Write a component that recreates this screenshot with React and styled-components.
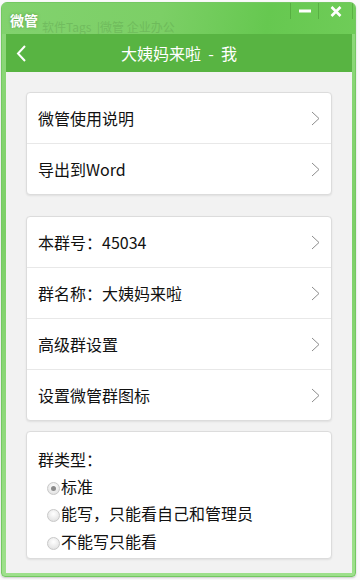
import React from 'react';
import styled, { createGlobalStyle } from 'styled-components';

const GlobalStyle = createGlobalStyle`
    html, body {
        margin: 0;
        padding: 0;
        background: #fafafa;
    }
    body {
        font-family: "Noto Sans CJK SC", "Noto Sans", sans-serif;
    }
`

const Desktop = styled.div`
    width: 360px;
    height: 580px;
    padding: 2px 4px 0 1px;
    box-sizing: border-box;
    overflow: hidden;
`

const Window = styled.div`
    height: 575px;
    display: flex;
    flex-direction: column;
    border: 1px solid #74c862;
    border-radius: 6px 6px 4px 4px;
    background: linear-gradient(180deg, #8fd97c 0%, #7ccf67 40%, #9ee08c 100%);
    padding: 0 3px 3px 4px;
    box-sizing: border-box;
    box-shadow: 0 1px 2px rgba(0, 0, 0, 0.2);
`

const TitleBar = styled.div`
    position: relative;
    height: 31px;
    flex: none;
    display: flex;
    align-items: flex-start;
    justify-content: space-between;
    background: linear-gradient(100deg, #82d26e 0%, #7ccf66 45%, #66c850 75%, #6fcc58 100%);
    margin: 0 -3px 0 -4px;
    border-radius: 5px 5px 0 0;
`

const AppName = styled.span`
    position: relative;
    z-index: 1;
    color: #fff;
    font-size: 14px;
    font-weight: bold;
    line-height: 16px;
    margin: 9px 0 0 8px;
    text-shadow: 0 0 3px rgba(60, 120, 40, 0.6);
`

const Ghost = styled.span`
    position: absolute;
    left: 40px;
    top: 17px;
    font-size: 12px;
    line-height: 14px;
    color: #3a6b30;
    opacity: 0.2;
    white-space: nowrap;
`

const WinButtons = styled.div`
    display: flex;
    height: 16px;
    margin-right: 2px;
    border-left: 1px solid rgba(70, 150, 50, 0.5);
`

const WinButton = styled.div`
    width: ${p => p.w}px;
    display: flex;
    align-items: center;
    justify-content: center;
    border-right: 1px solid rgba(70, 150, 50, 0.5);
    color: #fff;
`

const Inner = styled.div`
    flex: 1;
    display: flex;
    flex-direction: column;
    min-height: 0;
    background: #f2f2f2;
`

const Header = styled.div`
    height: 38px;
    flex: none;
    display: flex;
    align-items: center;
    justify-content: center;
    position: relative;
    background: #58b442;
    color: #fff;
    font-size: 16px;
    white-space: pre;
`

const BackBtn = styled.div`
    position: absolute;
    left: 10px;
    top: 11px;
    display: flex;
`

const Content = styled.div`
    flex: 1;
    padding: 20px 20px 0;
    display: flex;
    flex-direction: column;
`

const Card = styled.div`
    background: #fff;
    border: 1px solid #dcdcdc;
    border-radius: 4px;
    box-shadow: 0 1px 2px rgba(0, 0, 0, 0.08);
    margin-bottom: ${p => p.gap || 0}px;
`

const Row = styled.div`
    height: 50px;
    display: flex;
    align-items: center;
    justify-content: space-between;
    padding: 0 11px 0 11px;
    font-size: 16px;
    color: #111;
    border-top: 1px solid #e8e8e8;
    &:first-child {
        border-top: none;
    }
`

const Group = styled.div`
    padding: 14px 11px 3px;
    font-size: 16px;
    color: #111;
`

const GroupLabel = styled.div`
    line-height: 26px;
`

const Option = styled.label`
    display: flex;
    align-items: center;
    height: 27.5px;
    padding-left: 9px;
`

const Radio = styled.span`
    width: 11px;
    height: 11px;
    border-radius: 50%;
    border: 1px solid #c8c8c8;
    background: radial-gradient(circle at 50% 35%, #ffffff 0%, #e6e6e6 70%, #d6d6d6 100%);
    display: flex;
    align-items: center;
    justify-content: center;
    margin-top: 5px;
    margin-right: 1px;
    flex: none;
    &::after {
        content: "";
        display: ${p => (p.checked ? 'block' : 'none')};
        width: 5px;
        height: 5px;
        border-radius: 50%;
        background: #8a8a8a;
    }
`

const Chevron = () => (
    <svg width="9" height="15" viewBox="0 0 9 15">
        <polyline points="1,1 8,7.5 1,14" fill="none" stroke="#8c8c8c" strokeWidth="1" />
    </svg>
)

const menu1 = ['微管使用说明', '导出到Word']
const menu2 = ['本群号：45034', '群名称：大姨妈来啦', '高级群设置', '设置微管群图标']
const types = [
    { label: '标准', checked: true },
    { label: '能写，只能看自己和管理员' },
    { label: '不能写只能看' },
]

const App = () => {
    return (
        <Desktop>
            <GlobalStyle />
            <Window>
                <TitleBar>
                    <Ghost>软件Tags &nbsp;|微管 企业办公</Ghost>
                    <AppName>微管</AppName>
                    <WinButtons>
                        <WinButton w={27}>
                            <svg width="12" height="4"><rect width="12" height="3" y="0.5" fill="#fff" /></svg>
                        </WinButton>
                        <WinButton w={33}>
                            <svg width="12" height="11" viewBox="0 0 12 11">
                                <path d="M1.5 1 L10.5 10 M10.5 1 L1.5 10" stroke="#fff" strokeWidth="2.6" />
                            </svg>
                        </WinButton>
                    </WinButtons>
                </TitleBar>
                <Inner>
                    <Header>
                        <BackBtn>
                            <svg width="11" height="17" viewBox="0 0 11 17">
                                <polyline points="9,1 2,8.5 9,16" fill="none" stroke="#fff" strokeWidth="2" />
                            </svg>
                        </BackBtn>
                        大姨妈来啦  -  我
                    </Header>
                    <Content>
                        <Card gap={21}>
                            {menu1.map(t => (
                                <Row key={t}>{t}<Chevron /></Row>
                            ))}
                        </Card>
                        <Card gap={10}>
                            {menu2.map(t => (
                                <Row key={t}>{t}<Chevron /></Row>
                            ))}
                        </Card>
                        <Card>
                            <Group>
                                <GroupLabel>群类型：</GroupLabel>
                                {types.map(o => (
                                    <Option key={o.label}>
                                        <Radio checked={o.checked} />
                                        {o.label}
                                    </Option>
                                ))}
                            </Group>
                        </Card>
                    </Content>
                </Inner>
            </Window>
        </Desktop>
    )
}

export default App
